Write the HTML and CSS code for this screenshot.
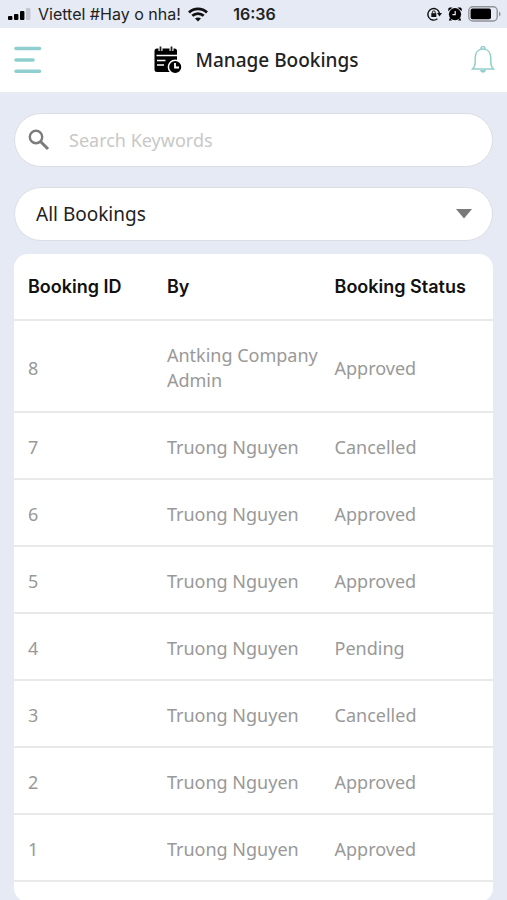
FILE: index.html
```html
<!DOCTYPE html>
<html lang="en">
<head>
    <meta charset="UTF-8">
    <meta name="viewport" content="width=device-width, initial-scale=1">
    <title>Manage Bookings</title>
    <link rel="stylesheet" href="styles.css">
</head>
<body>
    <div class="status-bar">
        <div class="carrier">
            <svg width="23" height="14" viewBox="0 0 23 14">
                <rect x="0" y="9" width="4.400" height="4" rx="1"/>
                <rect x="6" y="7" width="4.400" height="6" rx="1"/>
                <rect x="12" y="4" width="4.400" height="9" rx="1"/>
                <rect x="18" y="1" width="4.400" height="12" rx="1" fill="#c3c6ce"/>
            </svg>
            <span>Viettel #Hay o nha!</span>
            <svg width="20" height="15" viewBox="0 0 20 15" fill="none" stroke="#111" stroke-width="2.800">
                <path d="M1 5.400C6 .6 14 .6 19 5.400"/>
                <path d="M4.300 8.800c3.300-3 8.100-3 11.400 0"/>
                <path d="M10 14.600l-3-3c1.700-1.500 4.300-1.500 6 0z" fill="#111" stroke="none"/>
            </svg>
        </div>
        <span class="time">16:36</span>
        <div class="indicators">
            <svg width="15" height="14" viewBox="0 0 15 14" fill="none" stroke="#111" stroke-width="1.400">
                <path d="M10.400 11.800A5.800 5.800 0 1 1 12.400 6.200"/>
                <path d="M10 6h5l-2.500 3.400z" fill="#111" stroke="none"/>
                <rect x="4.300" y="6.200" width="5" height="3.800" fill="#111" stroke="none"/>
                <path d="M5.400 6.500V5.300a1.400 1.400 0 0 1 2.800 0v1.200" stroke-width="1"/>
            </svg>
            <svg width="14" height="14" viewBox="0 0 14 14">
                <circle cx="7" cy="7.200" r="6.100"/>
                <path d="M.3 4.200V1.500L1.500.5H4.500zM13.700 4.200V1.500L12.500.5H9.500zM2 10.500l-1.200 3h3.200zM12 10.500l1.200 3h-3.200z"/>
                <path d="M7.200 4v3.700H4.400" fill="none" stroke="#eee" stroke-width="1.200"/>
            </svg>
            <svg width="33" height="16" viewBox="0 0 33 16">
                <rect x=".8" y=".8" width="28.400" height="14.200" rx="4" fill="none" stroke="#929398" stroke-width="1.400"/>
                <rect x="2.600" y="2.600" width="20.400" height="10.600" rx="2"/>
                <path d="M31 5.500c2 .8 2 4.200 0 5z" fill="#929398"/>
            </svg>
        </div>
    </div>

    <header class="header">
        <button class="icon-btn" type="button" aria-label="Menu">
            <svg width="28" height="28" viewBox="0 0 28 28" stroke="#90cfcf" stroke-width="3.600" stroke-linecap="round">
                <path d="M2 2.500h23.500M2 14h17M2 25.300h23.500"/>
            </svg>
        </button>
        <h1 class="title">
            <svg width="28" height="28" viewBox="0 0 28 28">
                <path d="M3 2.500h17.500a2.500 2.500 0 0 1 2.500 2.500v21H3A2.500 2.500 0 0 1 .5 23.500V5A2.500 2.500 0 0 1 3 2.500z"/>
                <path d="M6.500 1v4M17.500 1v4" stroke="#fff" stroke-width="4"/>
                <path d="M6.500 .5v4.500M17.500 .5v4.500" stroke="#222" stroke-width="1.800"/>
                <path d="M2.500 9.500H23M3 14.500h8.500M3 19h7" stroke="#fff" stroke-width="1.600"/>
                <circle cx="21.200" cy="21" r="6.800" stroke="#fff" stroke-width="1.500"/>
                <path d="M21 17v4.500h4" fill="none" stroke="#fff" stroke-width="1.800"/>
            </svg>
            Manage Bookings
        </h1>
        <button class="icon-btn" type="button" aria-label="Notifications">
            <svg width="24" height="28" viewBox="0 0 24 28" fill="none" stroke="#94d0cb" stroke-width="1.500">
                <path d="M10 3.200V2.500a2 2 0 0 1 4 0v.7M1.500 23c2-2 2.700-3.500 2.700-7v-4c0-5.500 3-9 7.800-9s7.800 3.500 7.800 9v4c0 3.500.7 5 2.700 7z"/>
                <path d="M9 24c.5 3.500 5.500 3.500 6 0z" fill="#94d0cb" stroke="none"/>
            </svg>
        </button>
    </header>

    <main class="content">
        <label class="field search">
            <svg width="22" height="22" viewBox="0 0 22 22" fill="none" stroke="#7c7c7c" stroke-width="2.400">
                <circle cx="8" cy="8" r="6.200"/>
                <path d="M12.500 12.500l7.500 7.500" stroke-width="3"/>
            </svg>
            <input type="text" placeholder="Search Keywords" aria-label="Search Keywords">
        </label>

        <label class="field filter">
            <select aria-label="Filter bookings">
                <option>All Bookings</option>
                <option>Approved</option>
                <option>Pending</option>
                <option>Cancelled</option>
            </select>
            <svg width="16" height="10" viewBox="0 0 16 10"><path d="M0 0h16L8 9.500z" fill="#7a7a7a"/></svg>
        </label>

        <div class="card">
            <table class="bookings">
                <thead>
                    <tr><th class="col-id">Booking ID</th><th class="col-by">By</th><th>Booking Status</th></tr>
                </thead>
                <tbody>
                    <tr><td>8</td><td>Antking Company Admin</td><td>Approved</td></tr>
                    <tr><td>7</td><td>Truong Nguyen</td><td>Cancelled</td></tr>
                    <tr><td>6</td><td>Truong Nguyen</td><td>Approved</td></tr>
                    <tr><td>5</td><td>Truong Nguyen</td><td>Approved</td></tr>
                    <tr><td>4</td><td>Truong Nguyen</td><td>Pending</td></tr>
                    <tr><td>3</td><td>Truong Nguyen</td><td>Cancelled</td></tr>
                    <tr><td>2</td><td>Truong Nguyen</td><td>Approved</td></tr>
                    <tr><td>1</td><td>Truong Nguyen</td><td>Approved</td></tr>
                </tbody>
            </table>
        </div>
    </main>
</body>
</html>
```

FILE: styles.css
```css
*{
    padding: 0;
    margin: 0;
    box-sizing: border-box;
}
body{
    background: #e5eaf4;
    font-family: "Noto Sans", sans-serif;
    font-size: 18px;
    color: #222;
}
svg{
    display: block;
    flex-shrink: 0;
}

/* phone status bar */
.status-bar{
    display: grid;
    grid-template-columns: 1fr auto 1fr;
    align-items: center;
    height: 28px;
    padding: 0 6px 0 8px;
    font-family: Inter, sans-serif;
    font-size: 16px;
}
.carrier,
.indicators{
    display: flex;
    align-items: center;
    gap: 6px;
    white-space: nowrap;
}
.carrier{
    gap: 7px;
}
.indicators{
    justify-content: flex-end;
}
.time{
    font-weight: 600;
}

.header{
    display: flex;
    align-items: center;
    justify-content: space-between;
    height: 65px;
    padding: 0 12px 0 14px;
    background: #fff;
    border-bottom: 1px solid #e9ebf0;
}
.icon-btn{
    background: none;
    border: none;
    cursor: pointer;
}
.title{
    display: flex;
    align-items: center;
    gap: 13px;
    font-size: 19px;
    font-weight: 500;
}

.content{
    padding: 20px 14px 0;
}
.field{
    display: flex;
    align-items: center;
    height: 54px;
    padding: 0 20px 0 13px;
    margin-bottom: 20px;
    background: #fff;
    border: 1px solid #dcdee4;
    border-radius: 27px;
}
.search{
    gap: 19px;
}
.filter{
    padding-left: 21px;
    margin-bottom: 13px;
}
.field input,
.field select{
    flex: 1;
    min-width: 0;
    font: inherit;
    color: #222;
    background: none;
    border: none;
    outline: none;
    appearance: none;
}
.field select{
    font-size: 19px;
}
.field input::placeholder{
    color: #c8c8c8;
}

.card{
    background: #fff;
    border-radius: 14px;
    padding-bottom: 20px;
}
.bookings{
    width: 100%;
    table-layout: fixed;
    border-collapse: separate;
    border-spacing: 0;
}
.bookings th,
.bookings td{
    padding: 20px 0 20px 14px;
    border-bottom: 2px solid #e8e9eb;
    text-align: left;
    line-height: 25px;
}
.bookings th{
    font-family: Inter, sans-serif;
    font-weight: 600;
    color: #111;
}
.bookings td{
    padding-top: 22px;
    padding-bottom: 18px;
    color: #999;
}
.col-id{
    width: 29%;
}
.col-by{
    width: 35%;
}
```
